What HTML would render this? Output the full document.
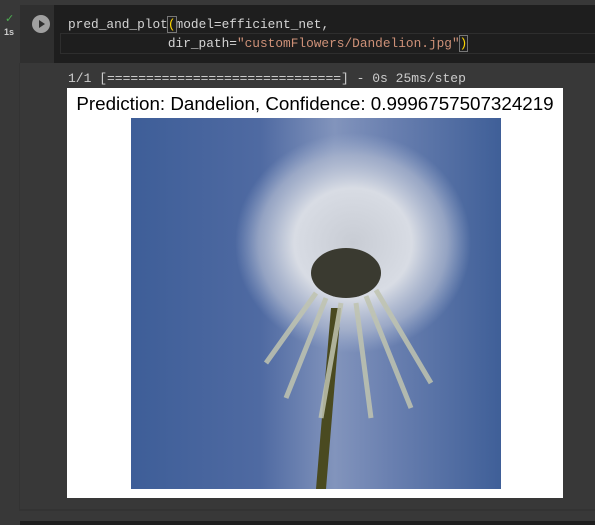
<!DOCTYPE html>
<html><head><style>
body{margin:0;width:595px;height:525px;background:#383838;overflow:hidden;position:relative;font-family:"Liberation Mono",monospace}
.cell{position:absolute;left:20px;top:5px;width:575px;height:58px;background:#1e1e1e}
.gut{position:absolute;left:20px;top:5px;width:34px;height:58px;background:#2f2f2f}
.play{position:absolute;left:32px;top:15px;width:18px;height:18px;border-radius:50%;background:#a0a0a0}
.play:after{content:"";position:absolute;left:7px;top:5px;border-left:6px solid #2f2f2f;border-top:4px solid transparent;border-bottom:4px solid transparent}
.code{position:absolute;left:68px;font-size:12.8px;color:#d4d4d4;white-space:pre}
.s{color:#ce9178}
.out{position:absolute;left:19px;top:63px;width:576px;height:446px;background:#383838;border-left:1px solid #333;border-bottom:2px solid #333}
.fig{position:absolute;left:67px;top:88px;width:496px;height:410px;background:#fff}
.title{position:absolute;left:0;width:496px;top:5px;text-align:center;font:18.8px "Liberation Sans",sans-serif;color:#000}
</style></head><body>
<div class="cell"></div><div class="gut"></div>
<div style="position:absolute;left:5px;top:12px;color:#4caf50;font:11px sans-serif">✓</div>
<div style="position:absolute;left:4px;top:27px;color:#ccc;font:bold 9px 'Liberation Sans',sans-serif">1s</div>
<div class="play"></div>
<div style="position:absolute;left:60px;top:33px;width:535px;height:19px;border:1px solid #2e2e2e"></div>
<div class="code" style="top:17px">pred_and_plot<span style="color:#ffd700;outline:1px solid #777">(</span>model=efficient_net,</div>
<div class="code" style="top:36px">             dir_path=<span class="s">"customFlowers/Dandelion.jpg"</span><span style="color:#ffd700;outline:1px solid #777">)</span></div>
<div class="out"></div>
<div class="code" style="top:71px;color:#ccc;font-size:13px">1/1 [==============================] - 0s 25ms/step</div>
<div class="fig"><div class="title">Prediction: Dandelion, Confidence: 0.9996757507324219</div></div>
<svg style="position:absolute;left:131px;top:118px" width="370" height="371">
<defs><radialGradient id="g"><stop offset="0" stop-color="#c8ccd4"/><stop offset=".5" stop-color="#d8dce4"/><stop offset=".8" stop-color="#b0bad0" stop-opacity=".7"/><stop offset="1" stop-color="#a0b0d0" stop-opacity="0"/></radialGradient>
<linearGradient id="b" x1="0" x2="1"><stop offset="0" stop-color="#3e5e98"/><stop offset=".35" stop-color="#4f6aa2"/><stop offset=".55" stop-color="#8294bc"/><stop offset=".7" stop-color="#6a80b0"/><stop offset="1" stop-color="#3f5f98"/></linearGradient></defs>
<rect width="370" height="371" fill="url(#b)"/>
<ellipse cx="222" cy="125" rx="118" ry="110" fill="url(#g)"/>
<path d="M200 190 L185 371 L195 371 L210 190Z" fill="#4a4a20"/>
<ellipse cx="215" cy="155" rx="35" ry="25" fill="#3a3a30"/>
<path d="M185 175 L135 245 M195 180 L155 280 M210 185 L190 300 M225 185 L240 300 M235 178 L280 290 M245 172 L300 265" stroke="#c0c4b0" stroke-width="5" opacity=".85"/>
</svg>
<div style="position:absolute;left:20px;top:521px;width:575px;height:4px;background:#1e1e1e"></div>
</body></html>
